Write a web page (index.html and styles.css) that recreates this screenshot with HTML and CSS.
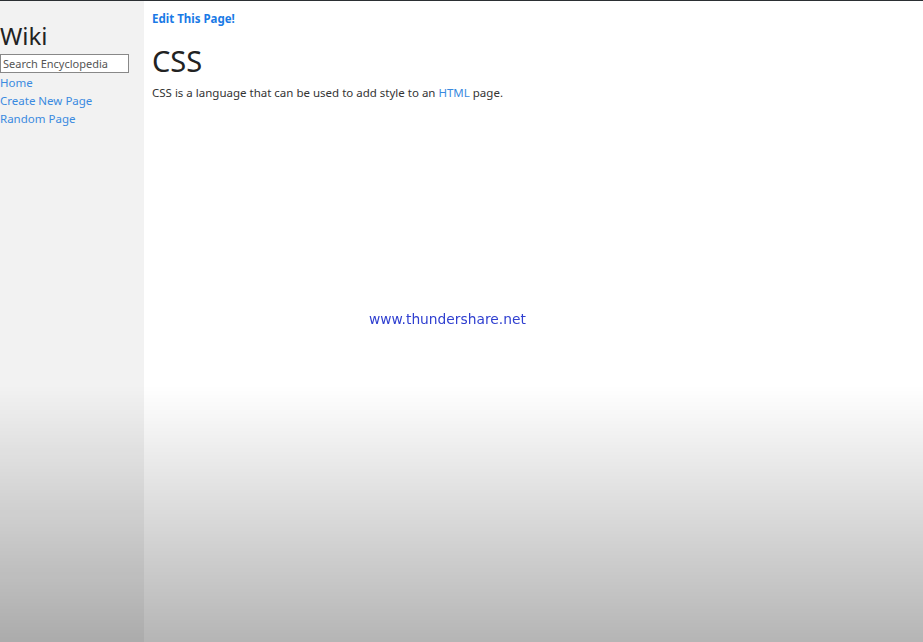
FILE: index.html
```html
<!DOCTYPE html>
<html>
<head>
<meta charset="utf-8">
<link rel="stylesheet" href="styles.css">
</head>
<body>
<div class="page">
  <aside class="sidebar">
    <h2 class="brand">Wiki</h2>
    <input class="search" type="text" placeholder="Search Encyclopedia">
    <nav class="nav">
      <a href="#">Home</a>
      <a href="#">Create New Page</a>
      <a href="#">Random Page</a>
    </nav>
  </aside>
  <main class="main">
    <a class="edit" href="#">Edit This Page!</a>
    <h1 class="title">CSS</h1>
    <p class="body-text">CSS is a language that can be used to add style to an <a href="#">HTML</a> page.</p>
  </main>
</div>
<div class="shade"></div>
<div class="watermark">www.thundershare.net</div>
</body>
</html>
```
FILE: styles.css
```css
html, body {
  margin: 0;
  padding: 0;
  height: 100%;
}
body {
  font-family: "Noto Sans", "Open Sans", sans-serif;
  color: #222;
  background: #fff;
  border-top: 1px solid #2b2f33;
  box-sizing: border-box;
  overflow: hidden;
}
a {
  color: #3a8ae0;
  text-decoration: none;
}
.page {
  display: flex;
  height: 100%;
}
.sidebar {
  width: 144px;
  flex: none;
  background: #f2f2f2;
  display: flex;
  flex-direction: column;
  align-items: flex-start;
}
.brand {
  margin: 19px 0 0 0;
  font-size: 24px;
  font-weight: 400;
  line-height: 31px;
  color: #222;
}
.search {
  margin: 3px 0 0 0;
  width: 129px;
  height: 19px;
  box-sizing: border-box;
  border: 1px solid #888;
  padding: 0 2px;
  font-family: inherit;
  font-size: 11px;
  background: #fff;
}
.search::placeholder {
  color: #555;
}
.nav {
  display: flex;
  flex-direction: column;
  margin-top: 1px;
}
.nav a {
  font-size: 11.5px;
  line-height: 18px;
}
.main {
  padding: 10px 8px;
  flex: 1;
}
.edit {
  display: block;
  font-size: 11.5px;
  font-weight: 700;
  color: #1a7ae6;
  line-height: 16px;
}
.title {
  margin: 14px 0 0 0;
  font-size: 29px;
  font-weight: 400;
  line-height: 40px;
  color: #222;
}
.body-text {
  margin: 3px 0 0 0;
  font-size: 11.5px;
  line-height: 18px;
  color: #333;
}
.shade {
  position: fixed;
  left: 0;
  right: 0;
  top: 385px;
  bottom: 0;
  background: linear-gradient(to bottom, rgba(0,0,0,0) 0%, rgba(0,0,0,0.03) 12%, rgba(0,0,0,0.29) 100%);
  pointer-events: none;
}
.watermark {
  position: fixed;
  left: 369px;
  top: 311px;
  font-family: "DejaVu Sans", Verdana, sans-serif;
  font-size: 13.8px;
  color: #2f3fd0;
}
```
